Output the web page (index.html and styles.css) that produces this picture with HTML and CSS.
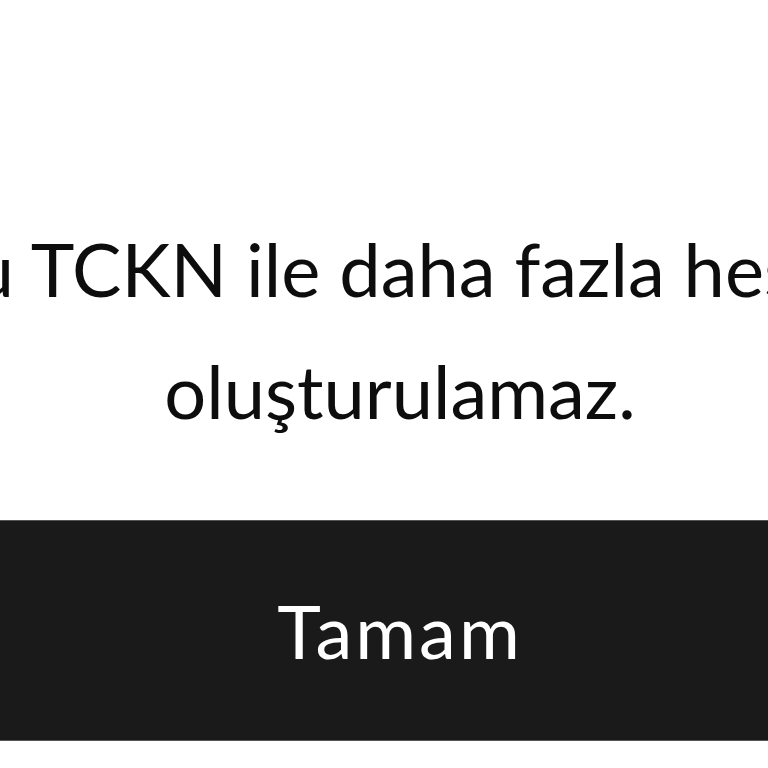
FILE: index.html
```html
<!DOCTYPE html>
<html lang="tr">
<head>
<meta charset="utf-8">
<link rel="stylesheet" href="styles.css">
</head>
<body>
<div class="dialog">
  <p class="message">Bu TCKN ile daha fazla hesap<br>oluşturulamaz.</p>
  <button class="ok">Tamam</button>
</div>
</body>
</html>
```
FILE: styles.css
```css
html, body {
  margin: 0;
  padding: 0;
  background: #ffffff;
  overflow: hidden;
  width: 768px;
  height: 768px;
}
.dialog {
  width: 1600px;
  margin-left: -400px;
  padding-top: 208px;
  display: flex;
  flex-direction: column;
  align-items: stretch;
  font-family: Lato, "Noto Sans", sans-serif;
}
.message {
  margin: 0;
  text-align: center;
  font-size: 74px;
  line-height: 122px;
  color: #0d0d0d;
  font-weight: 400;
}
.ok {
  margin-top: 68px;
  height: 221px;
  border: 0;
  border-top: 1px solid #555;
  border-bottom: 1px solid #555;
  background: #1a1a1a;
  color: #ffffff;
  font-family: inherit;
  font-size: 74px;
  letter-spacing: 3px;
  padding: 0;
}
```
